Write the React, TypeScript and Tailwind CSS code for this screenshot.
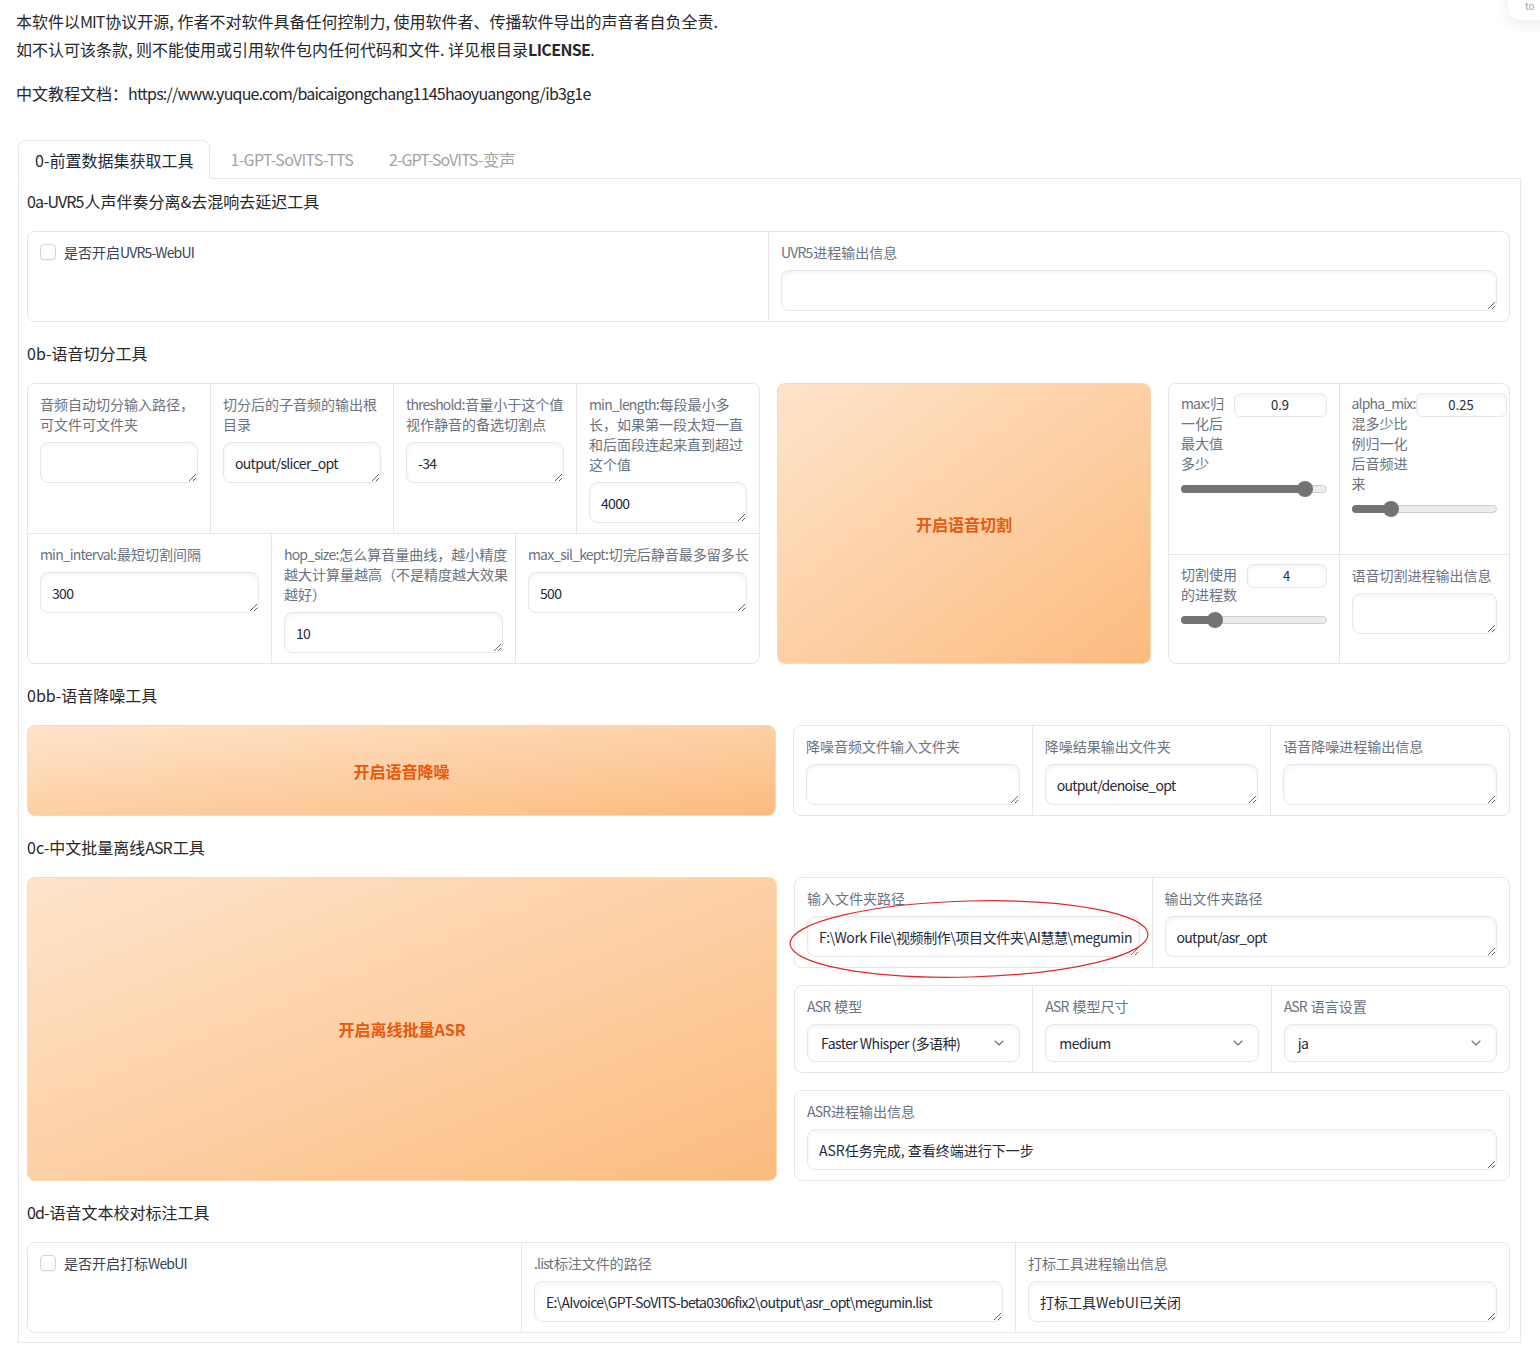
import { ChevronDown } from 'lucide-react';

const font = "font-['Noto_Sans_CJK_SC','Noto_Sans',sans-serif]";

// latin runs in the reference are narrower than Noto's, tighten them a little
function L({ children }: { children: React.ReactNode }) {
  return <span className="mr-[0.06em] tracking-[-0.06em]">{children}</span>;
}

function Label({ children, className = '' }: { children: React.ReactNode; className?: string }) {
  return <span className={`text-[14px] leading-5 text-[#6b7280] ${className}`}>{children}</span>;
}

function TextBox({ value = '', className = '', nowrap = false }: { value?: string; className?: string; nowrap?: boolean }) {
  return (
    <textarea
      rows={1}
      wrap={nowrap ? 'off' : 'soft'}
      defaultValue={value}
      className={`block h-[41px] w-full rounded-lg border border-[#e5e7eb] bg-white px-[11px] py-[10px] text-[14px] leading-5 text-[#1f2937] shadow-[inset_0_2px_4px_rgba(0,0,0,0.05)] outline-none ${className}`}
    />
  );
}

// label + textarea cell, gradio style
function Field({ label, value, tight = false, nowrap = false }: { label: React.ReactNode; value?: string; tight?: boolean; nowrap?: boolean }) {
  return (
    <div className="flex flex-col gap-2 bg-white px-3 pt-[10px] pb-[10px]">
      <Label>{label}</Label>
      <TextBox value={value} nowrap={nowrap} className={tight ? 'tracking-[-0.05em]' : nowrap ? 'tracking-[-0.4px]' : ''} />
    </div>
  );
}

function Dropdown({ label, value }: { label: React.ReactNode; value: string }) {
  return (
    <div className="flex flex-col gap-2 bg-white px-3 pt-[10px] pb-[10px]">
      <Label>{label}</Label>
      <div className="flex h-[38px] items-center justify-between rounded-lg border border-[#e5e7eb] bg-white pl-[13px] pr-3 text-[14px] text-[#1f2937] shadow-[inset_0_2px_4px_rgba(0,0,0,0.05)]">
        <span className="tracking-[-0.04em]">{value}</span>
        <ChevronDown className="h-4 w-4 text-[#6b7280]" strokeWidth={1.75} aria-hidden="true" />
      </div>
    </div>
  );
}

function Slider({ fill, thumb }: { fill: string; thumb: string }) {
  return (
    <div className="relative mt-3 h-[8px] rounded-full border border-[#cfcfcf] bg-[#ececec]">
      <div className={`absolute -inset-y-px -left-px rounded-full bg-[#737373] ${fill}`} />
      <div className={`absolute top-1/2 h-4 w-4 -translate-x-1/2 -translate-y-1/2 rounded-full bg-[#737373] ${thumb}`} />
    </div>
  );
}

function NumberBox({ value, width }: { value: string; width: string }) {
  return (
    <div className={`flex h-[24px] shrink-0 items-center justify-center rounded-md border border-[#e5e7eb] bg-white text-[13px] text-[#1f2937] shadow-[inset_0_2px_4px_rgba(0,0,0,0.05)] ${width}`}>
      {value}
    </div>
  );
}

function Checkbox({ label }: { label: React.ReactNode }) {
  return (
    <div className="bg-white px-3 pt-3">
      <div className="flex items-center gap-2">
        <span className="h-4 w-4 rounded border border-[#d1d5db] bg-white shadow-[0_1px_2px_rgba(0,0,0,0.06)]" />
        <span className="text-[14px] leading-4 text-[#374151]">{label}</span>
      </div>
    </div>
  );
}

function Heading({ children }: { children: React.ReactNode }) {
  return <div className="flex h-[29px] items-center text-[16px] text-[#27272a]">{children}</div>;
}

function OrangeButton({ children }: { children: React.ReactNode }) {
  return (
    <div className="flex items-center justify-center rounded-lg border border-[#fed7aa] bg-linear-to-br from-[#fee4ca] to-[#fbbb7e] text-[16px] font-semibold text-[#ea580c]">
      {children}
    </div>
  );
}

const block = 'overflow-hidden rounded-lg border border-[#e5e7eb] bg-[#e5e7eb]';

export default function App() {
  return (
    <div className={`relative min-h-screen overflow-hidden bg-white ${font}`}>
      {/* floating corner box */}
      <div className="absolute left-[1508px] top-[-24px] flex h-[44px] w-[70px] items-end rounded-xl bg-white pb-[9px] pl-[17px] shadow-[0_4px_14px_rgba(0,0,0,0.08)]">
        <span className="text-[10px] leading-none text-[#9ca3af]">to</span>
      </div>

      {/* Intro text */}
      <div className="pl-4 pt-[7px] text-[16px] leading-7 text-[#27272a]">
        <p>本软件以<L>MIT</L>协议开源, 作者不对软件具备任何控制力, 使用软件者、传播软件导出的声音者自负全责.</p>
        <p>如不认可该条款, 则不能使用或引用软件包内任何代码和文件. 详见根目录<span className="font-bold tracking-[-0.04em]">LICENSE</span>.</p>
        <p className="mt-4">中文教程文档：<span className="tracking-[-0.8px]">https://www.yuque.com/baicaigongchang1145haoyuangong/ib3g1e</span></p>
      </div>

      <div className="ml-[18px] mt-[33px] w-[1503px]">
        {/* Tabs */}
        <div className="flex gap-1 border-b border-[#e5e7eb]">
          <div className="-mb-px flex h-[39px] items-center rounded-t-lg border border-[#e5e7eb] border-b-white bg-white px-4 text-[16px] text-[#1f2937]">
            0-前置数据集获取工具
          </div>
          <div className="flex h-[38px] items-center px-4 text-[16px] tracking-[-0.04em] text-[#a3a3a3]">1-GPT-SoVITS-TTS</div>
          <div className="flex h-[38px] items-center px-4 text-[16px] text-[#a3a3a3]"><L>2-GPT-SoVITS-</L>变声</div>
        </div>

        {/* Tab panel */}
        <div className="flex flex-col gap-4 border border-t-0 border-[#e5e7eb] pb-[9px] pl-2 pr-[10px] pt-[7px]">
          <Heading><L>0a-UVR5</L>人声伴奏分离&amp;去混响去延迟工具</Heading>
          <div className={`grid grid-cols-2 gap-px ${block}`}>
            <Checkbox label={<>是否开启<L>UVR5-WebUI</L></>} />
            <Field label={<><L>UVR5</L>进程输出信息</>} />
          </div>

          <Heading>0b-语音切分工具</Heading>
          <div className="grid grid-cols-[733px_374px_1fr] gap-[17px]">
            <div className={`flex flex-col gap-px ${block}`}>
              <div className="grid grid-cols-4 gap-px">
                <Field label="音频自动切分输入路径，可文件可文件夹" />
                <Field label="切分后的子音频的输出根目录" value="output/slicer_opt" tight />
                <Field label={<><L>threshold:</L>音量小于这个值视作静音的备选切割点</>} value="-34" tight />
                <Field label={<><L>min_length:</L>每段最小多长，如果第一段太短一直和后面段连起来直到超过这个值</>} value="4000" tight />
              </div>
              <div className="grid flex-1 grid-cols-3 gap-px">
                <Field label={<><L>min_interval:</L>最短切割间隔</>} value="300" tight />
                <Field
                  label={
                    <span className="whitespace-nowrap">
                      <L>hop_size:</L>怎么算音量曲线，越小精度
                      <br />
                      越大计算量越高（不是精度越大效果
                      <br />
                      越好）
                    </span>
                  }
                  value="10"
                  tight
                />
                <Field label={<span className="whitespace-nowrap"><L>max_sil_kept:</L>切完后静音最多留多长</span>} value="500" tight />
              </div>
            </div>

            <OrangeButton>开启语音切割</OrangeButton>

            <div className={`grid grid-cols-2 grid-rows-[170px_1fr] gap-px ${block}`}>
              <div className="bg-white px-3 pt-[9px]">
                <div className="flex gap-1.5">
                  <Label className="flex-1"><L>max:</L>归一化后最大值多少</Label>
                  <NumberBox value="0.9" width="w-[93px]" />
                </div>
                <Slider fill="w-[86%]" thumb="left-[86%]" />
              </div>
              <div className="bg-white px-3 pt-[9px]">
                <div className="flex">
                  <Label className="w-[62px] shrink-0"><L>alpha_mix:</L>混多少比例归一化后音频进来</Label>
                  <div className="ml-[2px] shrink-0">
                    <NumberBox value="0.25" width="w-[91px]" />
                  </div>
                </div>
                <Slider fill="w-[27%]" thumb="left-[27%]" />
              </div>
              <div className="bg-white px-3 pt-[9px]">
                <div className="flex gap-1">
                  <Label className="flex-1">切割使用的进程数</Label>
                  <NumberBox value="4" width="w-[80px]" />
                </div>
                <Slider fill="w-[23%]" thumb="left-[23%]" />
              </div>
              <Field label="语音切割进程输出信息" />
            </div>
          </div>

          <Heading>0bb-语音降噪工具</Heading>
          <div className="grid grid-cols-[749px_1fr] gap-[17px]">
            <OrangeButton>开启语音降噪</OrangeButton>
            <div className={`grid grid-cols-3 gap-px ${block}`}>
              <Field label="降噪音频文件输入文件夹" />
              <Field label="降噪结果输出文件夹" value="output/denoise_opt" tight />
              <Field label="语音降噪进程输出信息" />
            </div>
          </div>

          <Heading>0c-中文批量离线<L>ASR</L>工具</Heading>
          <div className="grid grid-cols-[750px_1fr] gap-[17px]">
            <OrangeButton>开启离线批量ASR</OrangeButton>
            <div className="flex flex-col gap-[17px]">
              <div className={`grid grid-cols-2 gap-px ${block}`}>
                <Field label="输入文件夹路径" value="F:\Work File\视频制作\项目文件夹\AI慧慧\megumin" nowrap />
                <Field label="输出文件夹路径" value="output/asr_opt" tight />
              </div>
              <div className={`grid grid-cols-3 gap-px ${block}`}>
                <Dropdown label={<><L>ASR</L> 模型</>} value="Faster Whisper (多语种)" />
                <Dropdown label={<><L>ASR</L> 模型尺寸</>} value="medium" />
                <Dropdown label={<><L>ASR</L> 语言设置</>} value="ja" />
              </div>
              <div className={`grid ${block}`}>
                <Field label={<><L>ASR</L>进程输出信息</>} value="ASR任务完成, 查看终端进行下一步" />
              </div>
            </div>
          </div>

          <Heading><L>0d-</L>语音文本校对标注工具</Heading>
          <div className={`grid grid-cols-3 gap-px ${block}`}>
            <Checkbox label={<>是否开启打标<L>WebUI</L></>} />
            <Field label={<><L>.list</L>标注文件的路径</>} value="E:\AIvoice\GPT-SoVITS-beta0306fix2\output\asr_opt\megumin.list" tight />
            <Field label="打标工具进程输出信息" value="打标工具WebUI已关闭" />
          </div>
        </div>
      </div>

      {/* red annotation ellipse */}
      <svg className="pointer-events-none absolute left-[786px] top-[896px]" width="366" height="86" viewBox="0 0 366 86">
        <ellipse cx="183" cy="43" rx="179" ry="38" fill="none" stroke="#e0282e" strokeWidth="1.2" transform="rotate(-1.5 183 43)" />
      </svg>
    </div>
  );
}
